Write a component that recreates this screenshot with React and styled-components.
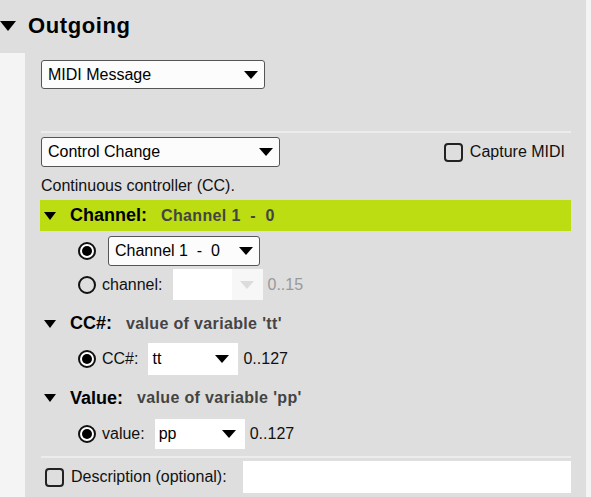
import React from 'react';
import styled, { createGlobalStyle } from 'styled-components';

const GlobalStyle = createGlobalStyle`
  html, body {
    margin: 0;
    padding: 0;
    background: #dedede;
  }
  body {
    font-family: "Liberation Sans", Arial, sans-serif;
    color: #111;
    font-size: 16px;
  }
`;

const Page = styled.div`
  display: flex;
  height: 497px;
  overflow: hidden;
`;

const Main = styled.div`
  width: 586px;
  display: flex;
  flex-direction: column;
`;

const RightStrip = styled.div`
  width: 5px;
  background: #f4f4f4;
`;

const Caret = styled.span`
  display: inline-block;
  width: 0;
  height: 0;
  flex: none;
  border-left: ${p => p.w / 2}px solid transparent;
  border-right: ${p => p.w / 2}px solid transparent;
  border-top: ${p => p.h}px solid ${p => p.color || '#000'};
`;

const Header = styled.div`
  height: 53px;
  display: flex;
  align-items: center;
  gap: 12px;
  padding-bottom: 2px;
  box-sizing: border-box;
`;

const Title = styled.h2`
  margin: 0;
  font-size: 22px;
  font-weight: bold;
  letter-spacing: 0.6px;
  color: #000;
`;

const Body = styled.div`
  flex: 1;
  display: flex;
`;

const LeftStrip = styled.div`
  width: 25px;
  background: #f4f4f4;
`;

const Content = styled.div`
  width: 531px;
  margin-left: 15px;
  display: flex;
  flex-direction: column;
`;

const SelectBox = styled.div`
  width: ${p => p.width}px;
  height: ${p => p.height}px;
  box-sizing: border-box;
  display: flex;
  align-items: center;
  justify-content: space-between;
  padding: 0 ${p => (p.bordered ? 6 : 9)}px 0 ${p => (p.bordered ? 6 : 4)}px;
  background: ${p => (p.bordered ? '#fcfcfc' : '#fff')};
  border: ${p => (p.bordered ? '1px solid #555' : 'none')};
  border-radius: ${p => (p.bordered ? '3px' : '0')};
  font-size: 16px;
  color: #000;
  white-space: pre;
  flex: none;
  margin-left: ${p => p.indent || 0}px;
`;

const DisabledSelect = styled.div`
  width: 90px;
  height: 31px;
  display: flex;
  flex: none;
  background: #fff;
`;

const DisabledArrow = styled.div`
  margin-left: auto;
  width: 31px;
  display: flex;
  align-items: center;
  justify-content: center;
  background: #f7f7f7;
`;

const Select = ({ value, width, height, bordered, indent }) => (
  <SelectBox width={width} height={height} bordered={bordered} indent={indent}>
    <span>{value}</span>
    <Caret w={14} h={8} />
  </SelectBox>
);

const Divider = styled.div`
  height: 2px;
  background: #ececec;
  margin: ${p => p.top}px 0 ${p => p.bottom}px 1px;
`;

const TypeRow = styled.div`
  display: flex;
  align-items: center;
  justify-content: space-between;
  padding-left: 1px;
`;

const CheckLabel = styled.label`
  display: flex;
  align-items: center;
  gap: 7px;
  font-size: 16px;
  color: #111;
  margin-right: ${p => p.right || 0}px;
  margin-left: ${p => p.left || 0}px;
`;

const CheckBox = styled.span`
  width: 19px;
  height: 19px;
  box-sizing: border-box;
  border: 2px solid #222;
  border-radius: 4px;
  flex: none;
`;

const Hint = styled.div`
  font-size: 16px;
  line-height: 18px;
  margin: 10px 0 5px 1px;
  color: #111;
`;

const SectionHeader = styled.div`
  height: ${p => p.height}px;
  box-sizing: border-box;
  padding-top: ${p => p.shift || 0}px;
  display: flex;
  align-items: center;
  padding-left: 4px;
  background: ${p => (p.active ? '#bbdd11' : 'transparent')};
`;

const SectionName = styled.span`
  font-size: 18px;
  font-weight: bold;
  color: #000;
  margin-left: 14px;
`;

const SectionValue = styled.span`
  font-size: 16px;
  font-weight: bold;
  letter-spacing: 0.35px;
  color: #444;
  margin-left: 14px;
  white-space: pre;
`;

const OptionRow = styled.div`
  height: ${p => p.height}px;
  display: flex;
  align-items: center;
  padding-left: 38px;
  margin-top: ${p => p.top || 0}px;
`;

const Radio = styled.span`
  width: 18px;
  height: 18px;
  box-sizing: border-box;
  border-radius: 50%;
  border: 2px solid #111;
  flex: none;
  margin-right: 6px;
  display: flex;
  align-items: center;
  justify-content: center;
  background: ${p => (p.checked ? '#fff' : 'transparent')};
  &::after {
    content: '';
    display: ${p => (p.checked ? 'block' : 'none')};
    width: 10px;
    height: 10px;
    border-radius: 50%;
    background: #000;
  }
`;

const OptionLabel = styled.span`
  font-size: 16px;
  color: #111;
  margin-right: 10px;
`;

const Range = styled.span`
  font-size: 16px;
  color: ${p => (p.muted ? '#999' : '#111')};
  margin-left: 5px;
`;

const DescRow = styled.div`
  display: flex;
  align-items: center;
  height: 32px;
`;

const DescInput = styled.div`
  margin-left: auto;
  width: 328px;
  height: 32px;
  background: #fff;
`;

export default function App() {
  return (
    <>
      <GlobalStyle />
      <Page>
        <Main>
          <Header>
            <Caret w={16} h={10} />
            <Title>Outgoing</Title>
          </Header>
          <Body>
            <LeftStrip />
            <Content>
              <div style={{ height: 7 }} />
              <Select value="MIDI Message" width={224} height={29} bordered indent={1} />
              <Divider top={42} bottom={4} />
              <TypeRow>
                <Select value="Control Change" width={239} height={30} bordered />
                <CheckLabel right={6}>
                  <CheckBox />
                  Capture MIDI
                </CheckLabel>
              </TypeRow>
              <Hint>Continuous controller (CC).</Hint>

              <SectionHeader active height={31}>
                <Caret w={13} h={8} />
                <SectionName>Channel:</SectionName>
                <SectionValue>Channel 1  -  0</SectionValue>
              </SectionHeader>
              <OptionRow height={30} top={5}>
                <Radio checked />
                <Select value="Channel 1  -  0" width={152} height={30} bordered indent={6} />
              </OptionRow>
              <OptionRow height={31} top={3}>
                <Radio />
                <OptionLabel>channel:</OptionLabel>
                <DisabledSelect>
                  <DisabledArrow>
                    <Caret w={14} h={8} color="#dcdcdc" />
                  </DisabledArrow>
                </DisabledSelect>
                <Range muted>0..15</Range>
              </OptionRow>

              <SectionHeader height={43} shift={4}>
                <Caret w={13} h={8} />
                <SectionName>CC#:</SectionName>
                <SectionValue>value of variable 'tt'</SectionValue>
              </SectionHeader>
              <OptionRow height={32}>
                <Radio checked />
                <OptionLabel>CC#:</OptionLabel>
                <Select value="tt" width={90} height={32} />
                <Range>0..127</Range>
              </OptionRow>

              <SectionHeader height={44} shift={2}>
                <Caret w={13} h={8} />
                <SectionName>Value:</SectionName>
                <SectionValue>value of variable 'pp'</SectionValue>
              </SectionHeader>
              <OptionRow height={30}>
                <Radio checked />
                <OptionLabel>value:</OptionLabel>
                <Select value="pp" width={90} height={30} />
                <Range>0..127</Range>
              </OptionRow>

              <Divider top={7} bottom={3} />
              <DescRow>
                <CheckLabel left={5}>
                  <CheckBox />
                  Description (optional):
                </CheckLabel>
                <DescInput />
              </DescRow>
            </Content>
          </Body>
        </Main>
        <RightStrip />
      </Page>
    </>
  );
}
